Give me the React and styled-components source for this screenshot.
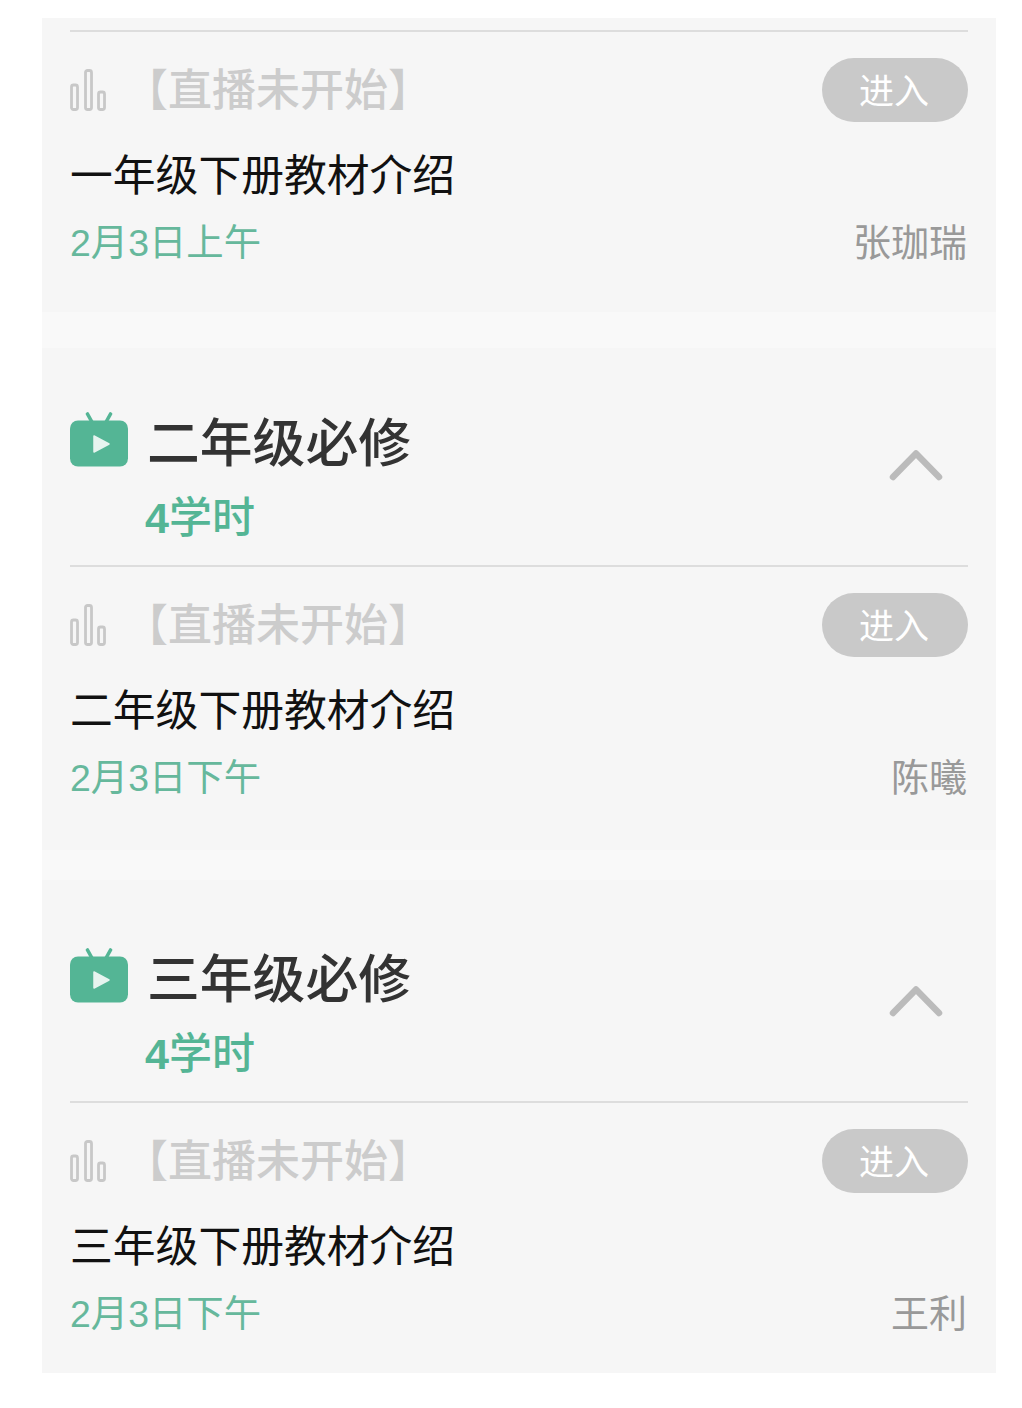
import React from 'react'
import styled, { createGlobalStyle } from 'styled-components'

const GlobalStyle = createGlobalStyle`
html, body {
  margin: 0;
  padding: 0;
  background: #ffffff;
}
body {
  font-family: "Liberation Sans", "Noto Sans CJK SC", sans-serif;
}
`

const groups = [
  {
    id: 1,
    title: '一年级必修',
    course: '一年级下册教材介绍',
    date: '2月3日上午',
    teacher: '张珈瑞',
    hideHead: true,
    band: 0,
    top: 12,
    bottom: 47,
  },
  {
    id: 2,
    title: '二年级必修',
    course: '二年级下册教材介绍',
    date: '2月3日下午',
    teacher: '陈曦',
    band: 36,
    top: 0,
    bottom: 50,
  },
  {
    id: 3,
    title: '三年级必修',
    course: '三年级下册教材介绍',
    date: '2月3日下午',
    teacher: '王利',
    band: 30,
    top: 4,
    bottom: 37,
  },
]

function TvIcon() {
  return (
    <svg width="58" height="56" viewBox="0 0 58 56">
      <path d="M17.5 2 L22.5 11 M40.5 2 L35.5 11" stroke="#54b595" strokeWidth="3.6" strokeLinecap="round" fill="none" />
      <rect x="0" y="8.5" width="58" height="46" rx="8" fill="#54b595" />
      <path d="M24 24 L39 32 L24 40 Z" fill="#e6f4ef" stroke="#e6f4ef" strokeWidth="1.5" strokeLinejoin="round" />
    </svg>
  )
}

function BarsIcon() {
  return (
    <svg width="36" height="42" viewBox="0 0 36 42">
      <rect x="1.5" y="16" width="6" height="24.5" rx="2" fill="none" stroke="#c8c8c8" strokeWidth="2.8" />
      <rect x="15.5" y="1.5" width="6" height="39" rx="2" fill="none" stroke="#c8c8c8" strokeWidth="2.8" />
      <rect x="28.5" y="23" width="6" height="17.5" rx="2" fill="none" stroke="#c8c8c8" strokeWidth="2.8" />
    </svg>
  )
}

function ChevronIcon() {
  return (
    <svg width="54" height="34" viewBox="0 0 54 34">
      <path d="M4 29 L27 5.5 L50 29" fill="none" stroke="#bbbbbb" strokeWidth="6.5" strokeLinecap="round" strokeLinejoin="round" />
    </svg>
  )
}

export default function App() {
  return (
    <>
      <GlobalStyle />
      <Page>
        <Panel>
          {groups.map((g) => (
            <Group key={g.id} $band={g.band} $top={g.top} $bottom={g.bottom}>
              {!g.hideHead && (
                <Head>
                  <HeadMain>
                    <HeadTop>
                      <IconSlot>
                        <TvIcon />
                      </IconSlot>
                      <GroupTitle>{g.title}</GroupTitle>
                    </HeadTop>
                    <Hours><HoursNum>4</HoursNum>学时</Hours>
                  </HeadMain>
                  <Toggle>
                    <ChevronIcon />
                  </Toggle>
                </Head>
              )}
              <Divider />
              <Lesson>
                <StatusRow>
                  <Status>
                    <BarsIcon />
                    <StatusText>【直播未开始】</StatusText>
                  </Status>
                  <EnterButton>进入</EnterButton>
                </StatusRow>
                <CourseName>{g.course}</CourseName>
                <MetaRow>
                  <DateText>{g.date}</DateText>
                  <Teacher>{g.teacher}</Teacher>
                </MetaRow>
              </Lesson>
            </Group>
          ))}
        </Panel>
      </Page>
    </>
  )
}

const Page = styled.div`
width: 1022px;
height: 1408px;
padding: 18px 26px 35px 42px;
box-sizing: border-box;
overflow: hidden;
`
const Panel = styled.div`
display: flex;
flex-direction: column;
background: #f6f6f6;
`
const Group = styled.section`
padding: ${(p) => p.$top}px 28px ${(p) => p.$bottom}px;
border-top: ${(p) => p.$band}px solid #f9f9f9;
`
const Head = styled.div`
display: flex;
justify-content: space-between;
height: 217px;
box-sizing: border-box;
padding: 64px 25px 0 0;
`
const HeadMain = styled.div`
display: flex;
flex-direction: column;
`
const HeadTop = styled.div`
display: flex;
gap: 19px;
height: 60px;
`
const IconSlot = styled.div`
display: flex;
height: 56px;
`
const GroupTitle = styled.div`
padding-top: 2px;
font-size: 52.8px;
line-height: 60px;
font-weight: 500;
color: #333333;
`
const Hours = styled.div`
padding-left: 75px;
margin-top: 20px;
font-size: 43px;
line-height: 52px;
font-weight: 500;
color: #54b595;
`
const HoursNum = styled.span`
font-weight: 700;
`
const Toggle = styled.div`
margin-top: 36px;
`
const Divider = styled.div`
height: 2px;
background: #dddddd;
`
const Lesson = styled.div`
padding-top: 26px;
`
const StatusRow = styled.div`
display: flex;
align-items: center;
justify-content: space-between;
height: 64px;
`
const Status = styled.div`
display: flex;
align-items: center;
gap: 18px;
`
const StatusText = styled.div`
padding-top: 2px;
font-size: 44px;
line-height: 60px;
font-weight: 500;
color: #cccccc;
`
const EnterButton = styled.button`
width: 146px;
height: 64px;
padding: 0 2px 4px 0;
border: 0;
border-radius: 32px;
background: #c9c9c9;
color: #ffffff;
font-family: inherit;
font-size: 35px;
`
const CourseName = styled.div`
margin-top: 24px;
font-size: 42.8px;
line-height: 60px;
color: #111111;
`
const MetaRow = styled.div`
display: flex;
align-items: center;
justify-content: space-between;
margin-top: 9px;
height: 50px;
`
const DateText = styled.div`
font-size: 37.4px;
color: #66b89c;
`
const Teacher = styled.div`
padding: 0 1px 2px 0;
font-size: 38px;
color: #999999;
`
